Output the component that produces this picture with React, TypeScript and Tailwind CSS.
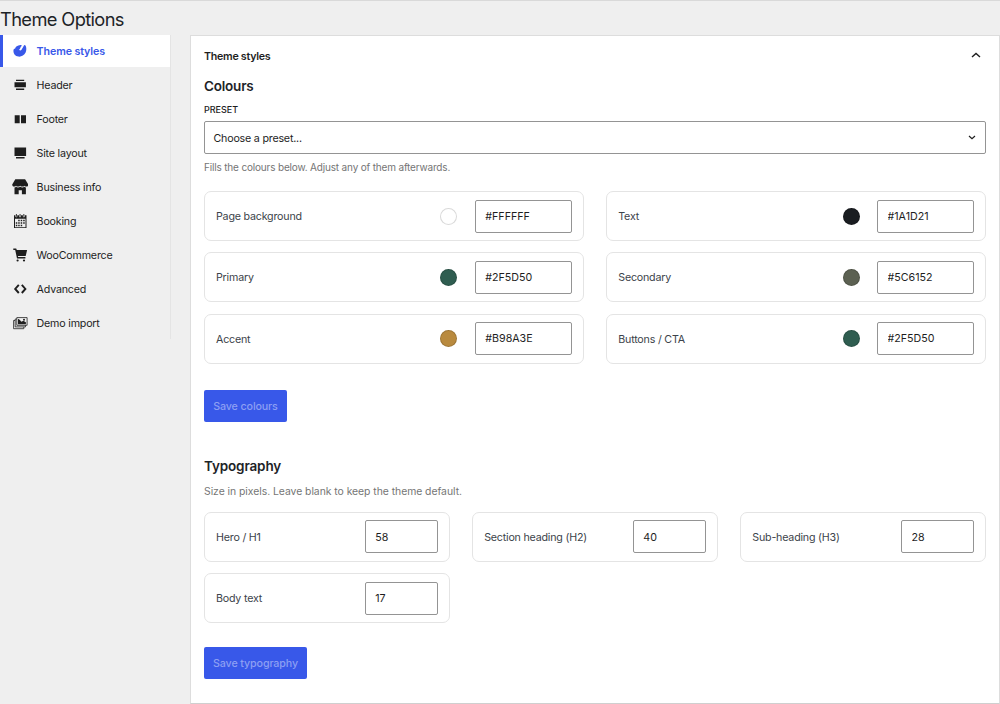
import type { ReactNode } from "react";

type NavItem = { label: string; icon: ReactNode; active?: boolean };

const Icon = ({ children }: { children: ReactNode }) => (
  <svg viewBox="0 0 16 16" className="w-4 h-4 shrink-0" fill="currentColor">{children}</svg>
);

const navItems: NavItem[] = [
  {
    label: "Theme styles",
    active: true,
    icon: (
      <Icon>
        <path d="M7.500 2.300c.9-.2 1.600-.3 2.200-.2L8.900 4.400l.9.500 2.500-3c.5.100.9.300 1.200.7 1.100 1.800 1.100 4.900.1 7-1.400 2.700-4.400 4.400-7.300 4C3.200 13.200 1.400 10.800 1.400 8c0-.9.200-1.600.500-2.100 1-.2 1.600-.7 1.700-1.700C4.500 3.200 6 2.600 7.500 2.300z" />
        <path className="fill-white" d="M12.400 1.500L9.700 6.400c-.5.900-1.400 1.300-2.100.9-.6-.4-.4-1.100.2-1.400.5-.3.7-1.400 1-2.100l1.100.1z" />
      </Icon>
    ),
  },
  {
    label: "Header",
    icon: (
      <Icon>
        <path d="M4 2.800h8.200v1.300H4zM2.500 5.300h11.400v4.900H2.500zM4 11.500h8.200v1.400H4z" />
      </Icon>
    ),
  },
  {
    label: "Footer",
    icon: (
      <Icon>
        <path d="M2.700 4.200h5v8H2.700zM9 4.200h5v8H9z" />
      </Icon>
    ),
  },
  {
    label: "Site layout",
    icon: (
      <Icon>
        <path d="M2.500 2.500h11.600v8.400H2.500zM4 12h8.600v1.500H4z" />
      </Icon>
    ),
  },
  {
    label: "Business info",
    icon: (
      <Icon>
        <path d="M3.300.200h9.800l3.200 5.300c0 1.300-.8 2.100-1.800 2.100-.9 0-1.500-.4-2-.9-.5.500-1.200.9-2.100.9-.9 0-1.600-.4-2.200-.9-.6.500-1.300.9-2.200.9-.8 0-1.500-.4-2-.9-.5.500-1.200.9-2 .9C.800 7.600.200 6.700.200 5.500z" />
        <path d="M2.500 8.400c.7 0 1.200-.2 1.600-.6.5.400 1.100.600 1.900.600.900 0 1.600-.2 2.200-.7.600.5 1.300.7 2.200.7.800 0 1.400-.2 1.900-.6.4.400 1 .600 1.600.600v6.900H9.900v-4H6.700v4H2.500z" />
      </Icon>
    ),
  },
  {
    label: "Booking",
    icon: (
      <Icon>
        <path fillRule="evenodd" d="M2 2.300h1.400v1.200c0 1.100 1.900 1.100 1.900 0V2.300h1.800v1.200c0 1.100 1.900 1.100 1.900 0V2.300h1.900v1.200c0 1.100 1.900 1.100 1.900 0V2.300h1.700V15H2zM3 5.800v8.400h10.500V5.800z" />
        <path d="M3.900 1h.9v2.700h-.9zM7.600 1h.9v2.700h-.9zM11.400 1h.9v2.700h-.9zM6.200 6.800h1.500v1.500H6.200zM8.700 6.800h1.500v1.500H8.700zM11.200 6.800h1.500v1.500h-1.500zM3.800 9.200h1.500v1.500H3.800zM6.200 9.200h1.500v1.500H6.200zM8.700 9.200h1.500v1.500H8.700zM11.200 9.200h1.500v1.500h-1.500zM3.800 11.700h1.500v1.500H3.800zM6.200 11.700h1.500v1.500H6.200zM8.700 11.700h1.500v1.500H8.700z" />
      </Icon>
    ),
  },
  {
    label: "WooCommerce",
    icon: (
      <Icon>
        <path d="M1.300 1.500h2.900l.6 1.400h10.300l-1.400 6H5.900l.3 1.200h7.200v1.300H5L3.200 2.900H1.300z" />
        <circle cx="5.600" cy="13.500" r="1.100" />
        <circle cx="12" cy="13.500" r="1.100" />
      </Icon>
    ),
  },
  {
    label: "Advanced",
    icon: (
      <Icon>
        <path fill="none" stroke="currentColor" strokeWidth="1.900" d="M6.800 3.800L3.200 7.900l3.600 4.100M9.800 3.800l3.600 4.100-3.600 4.100" />
      </Icon>
    ),
  },
  {
    label: "Demo import",
    icon: (
      <Icon>
        <path fill="none" stroke="currentColor" strokeWidth=".8" d="M4.800 2.600h10.300v7.700H4.800zM4.800 4H3.200v7.900h10.300v-1.600M3.200 5.500H1.600v8.200h10.200v-1.800" />
        <path d="M6 4c1.500.1 2.300 1.700 3.300 2.700.9-.6 2-.9 2.900-.4l1.700.9v2H6z" />
        <circle cx="12" cy="4.700" r="1" />
      </Icon>
    ),
  },
];

const colours = [
  { label: "Page background", value: "#FFFFFF" },
  { label: "Text", value: "#1A1D21" },
  { label: "Primary", value: "#2F5D50" },
  { label: "Secondary", value: "#5C6152" },
  { label: "Accent", value: "#B98A3E" },
  { label: "Buttons / CTA", value: "#2F5D50" },
];

const sizes = [
  { label: "Hero / H1", value: "58" },
  { label: "Section heading (H2)", value: "40" },
  { label: "Sub-heading (H3)", value: "28" },
  { label: "Body text", value: "17" },
];

const cardClass = "h-[50px] flex items-center border border-[#e4e4e4] rounded-[7px] px-[11px] text-[#3c434a]";
const inputClass = "h-[33px] border border-[#949494] rounded-[2px] bg-white pl-[9.500px] tracking-normal text-[#1e1e1e] outline-none";
const buttonClass = "h-8 pt-0.5 rounded-[2px] bg-[#3858e9] text-[#8c9ff3] font-medium tracking-[-0.12px] self-start";

export default function ThemeOptions() {
  return (
    <div className="w-[1000px] h-[704px] overflow-hidden bg-[#efefef] border-t border-[#d9d9d9] font-[Inter,sans-serif] text-[10.7px] leading-4 tracking-[-0.21px] text-[#1e1e1e] flex flex-col">
      <h1 className="h-[34px] shrink-0 pt-[6px] text-[18.300px] leading-6 tracking-[-0.63px] text-[#1d2327]">Theme Options</h1>
      <div className="flex items-start">
        <nav className="w-[171px] h-[304px] shrink-0 border-r border-[#e4e4e4] flex flex-col gap-0.5">
          {navItems.map((item) => (
            <a key={item.label} className={item.active ? "h-8 flex items-center gap-[8.600px] pl-[9px] border-l-[3px] border-[#3858e9] bg-white text-[#3858e9] font-semibold tracking-[-0.12px]" : "h-8 flex items-center gap-[8.600px] pl-3"}>
              {item.icon}
              <span className="pt-0.5">{item.label}</span>
            </a>
          ))}
        </nav>

        <main className="ml-[19px] w-[810px] h-[669px] bg-white border border-[#dddddd] border-b-[#cfcfcf] px-[13px] flex flex-col">
          <header className="h-[40px] flex items-center justify-between pr-[5px]">
            <h2 className="pt-px font-semibold tracking-[-0.28px]">Theme styles</h2>
            <svg viewBox="0 0 10 6" className="w-2.5 h-1.5 mb-0.5" fill="none" stroke="currentColor" strokeWidth="1.400"><path d="M1 5l4-3.600L9 5" /></svg>
          </header>

          <h3 className="h-5 leading-5 text-[13.5px] font-semibold text-[#1d2327]">Colours</h3>
          <label className="mt-[6px] h-4 text-[9px] font-medium tracking-normal">PRESET</label>
          <div className="mt-[3px] h-[33px] border border-[#949494] rounded-[2px] pl-[8.500px] pr-[9px] flex items-center justify-between">
            <span className="pt-0.5">Choose a preset...</span>
            <svg viewBox="0 0 8 5" className="w-2 h-[5px]" fill="none" stroke="currentColor" strokeWidth="1.200"><path d="M1 1l3 2.700L7 1" /></svg>
          </div>
          <p className="mt-[5px] text-[10px] tracking-[-0.17px] text-[#757575]">Fills the colours below. Adjust any of them afterwards.</p>

          <div className="mt-4 grid grid-cols-2 gap-x-[22.500px] gap-y-[11.300px]">
            {colours.map((c) => (
              <div key={c.label} className={cardClass}>
                <span className="flex-1 pt-0.5">{c.label}</span>
                <span className="w-[17px] h-[17px] mr-[17.500px] rounded-full border border-black/15" style={{ backgroundColor: c.value }} />
                <input className={`${inputClass} w-[97px]`} defaultValue={c.value} />
              </div>
            ))}
          </div>
          <button className={`${buttonClass} mt-[26px] w-[83px]`}>Save colours</button>

          <h3 className="mt-[34px] h-5 leading-5 text-[13.5px] font-semibold tracking-[-0.14px] text-[#1d2327]">Typography</h3>
          <p className="mt-[8px] text-[10.400px] tracking-[-0.04px] text-[#757575]">Size in pixels. Leave blank to keep the theme default.</p>
          <div className="mt-[12.400px] grid grid-cols-3 gap-x-[22.500px] gap-y-[11.300px]">
            {sizes.map((s) => (
              <div key={s.label} className={cardClass}>
                <span className="flex-1 pt-0.5">{s.label}</span>
                <input className={`${inputClass} w-[73px] pt-px`} defaultValue={s.value} />
              </div>
            ))}
          </div>
          <button className={`${buttonClass} mt-[23.500px] w-[103px]`}>Save typography</button>
        </main>
      </div>
    </div>
  );
}
